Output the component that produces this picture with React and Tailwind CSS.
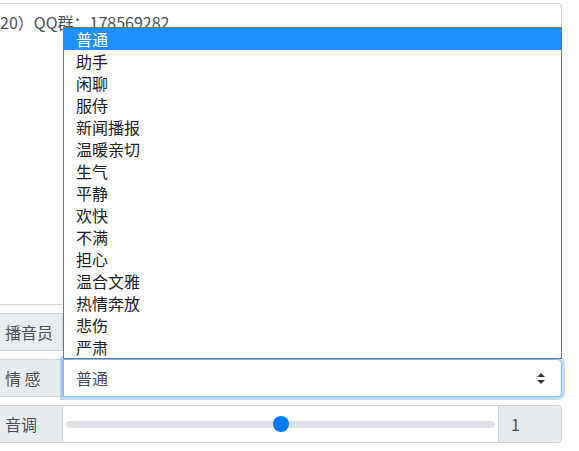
import React from "react";

const options = [
  "普通", "助手", "闲聊", "服侍", "新闻播报", "温暖亲切", "生气", "平静",
  "欢快", "不满", "担心", "温合文雅", "热情奔放", "悲伤", "严肃",
];

function Label({ children }) {
  return (
    <div className="w-[71px] shrink-0 bg-[#e9ecef] border border-[#ced4da] rounded-l-[4px] pl-3 flex items-center whitespace-nowrap text-[16px] leading-[24px] text-[#495057]">
      {children}
    </div>
  );
}

export default function App() {
  return (
    <div
      className="relative w-[579px] h-[451px] overflow-hidden bg-white"
      style={{ fontFamily: '"Noto Sans CJK SC", "Noto Sans", sans-serif' }}
    >
      <div className="ml-[-8px] w-[570px] pt-[3px]">
        <div className="h-[302px] border border-[#ced4da] rounded-[4px] pt-[6px] pl-[7px] text-[16px] leading-[24px] text-[#495057] whitespace-nowrap">
          20）QQ群：178569282
        </div>

        <div className="flex h-[38px] mt-[8px]">
          <Label>播音员</Label>
          <div className="flex-1 border border-l-0 border-[#ced4da] rounded-r-[4px] bg-white" />
        </div>

        <div className="flex h-[38px] mt-[8px]">
          <Label>情 感</Label>
          <div className="flex-1 flex items-center justify-between border border-[#80bdff] rounded-r-[4px] bg-white pl-[12px] pr-[16px] text-[16px] leading-[24px] text-[#495057] shadow-[0_0_0_3px_rgba(0,123,255,0.25)]">
            <span>普通</span>
            <svg width="8" height="11" viewBox="0 0 8 11">
              <path d="M4 0 L8 4 H0 Z" fill="#343a40" />
              <path d="M4 11 L0 7 H8 Z" fill="#343a40" />
            </svg>
          </div>
        </div>

        <div className="flex h-[38px] mt-[8px]">
          <Label>音调</Label>
          <div className="flex-1 flex items-center border border-x-0 border-[#ced4da] bg-white px-[3px]">
            <div className="relative flex-1 h-[7px] rounded-full bg-[#dee2e6]">
              <div className="absolute left-1/2 top-1/2 -translate-x-1/2 -translate-y-1/2 w-4 h-4 rounded-full bg-[#007bff]" />
            </div>
          </div>
          <div className="w-[64px] shrink-0 bg-[#e9ecef] border border-[#ced4da] rounded-r-[4px] px-3 flex items-center text-[16px] leading-[24px] text-[#495057]">
            1
          </div>
        </div>
      </div>

      <div className="absolute left-[63px] top-[27px] w-[499px] h-[332px] border border-[#767676] bg-white">
        {options.map((o, i) => (
          <div
            key={o}
            className={
              "h-[22px] pl-[12px] text-[16px] leading-[22px] " +
              (i === 0 ? "bg-[#1e90ff] text-white" : "text-[#222]")
            }
          >
            {o}
          </div>
        ))}
      </div>
    </div>
  );
}
